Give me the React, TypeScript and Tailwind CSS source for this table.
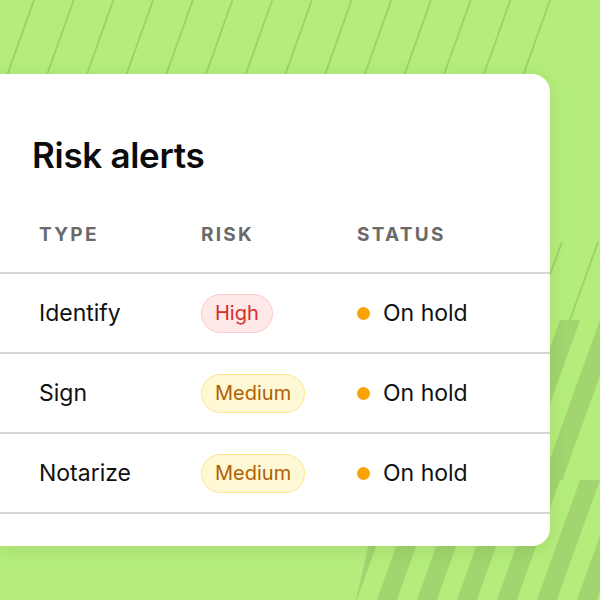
import React from 'react'

// ─── Data ─────────────────────────────────────────────────────────────────────

type Risk = 'High' | 'Medium'

interface Alert {
  type:   string
  risk:   Risk
  status: string
}

const ALERTS: Alert[] = [
  { type: 'Identify', risk: 'High',   status: 'On hold' },
  { type: 'Sign',     risk: 'Medium', status: 'On hold' },
  { type: 'Notarize', risk: 'Medium', status: 'On hold' },
]

const RISK_CLASS: Record<Risk, string> = {
  High:   'bg-[#ffe8e8] border-[#fcc8c8] text-[#d1302b]',
  Medium: 'bg-[#fff8d4] border-[#fde48c] text-[#b05f07]',
}

// ─── Background drawing ───────────────────────────────────────────────────────

const SLOPE = 0.36

function bands(ya: number, yb: number, start: number, count: number) {
  const d = (yb - ya) * SLOPE
  return Array.from({ length: count }, (_, i) => {
    const x = start + i * 40
    return `${x},${ya} ${x + 20},${ya} ${x + 20 - d},${yb} ${x - d},${yb}`
  })
}

function Backdrop() {
  const thin = Array.from({ length: 14 }, (_, i) => 34 + i * 39.7)
  return (
    <svg className="absolute inset-0" width="600" height="600" viewBox="0 0 600 600" aria-hidden>
      <defs>
        <clipPath id="band-area">
          <polygon points="420,320 600,320 600,600 356,600" />
        </clipPath>
      </defs>
      {thin.map(x => (
        <line key={x} x1={x} y1={0} x2={x - 30} y2={84} stroke="#9cd169" strokeWidth="1.8" />
      ))}
      <line x1={562} y1={242} x2={548} y2={280} stroke="#9cd169" strokeWidth="1.8" />
      <line x1={598} y1={242} x2={570} y2={320} stroke="#9cd169" strokeWidth="1.8" />
      <g clipPath="url(#band-area)" fill="#a2d46f">
        {bands(320, 480, 400, 6).map(p => <polygon key={'a' + p} points={p} />)}
        {bands(480, 600, 380, 8).map(p => <polygon key={'b' + p} points={p} />)}
      </g>
    </svg>
  )
}

// ─── Component ────────────────────────────────────────────────────────────────

export default function App() {
  return (
    <div
      className="relative w-[600px] h-[600px] overflow-hidden bg-[#b4ed7c] pt-[74px]"
      style={{ fontFamily: 'Inter, "Noto Sans", sans-serif' }}
    >
      <Backdrop />

      <div className="relative w-[550px] h-[472px] bg-white rounded-r-[18px] shadow-[0_4px_18px_rgba(60,110,20,0.12)]">
        <h1 className="pl-[32px] pt-[60px] text-[35px] leading-[42px] font-semibold tracking-[-0.3px] text-[#0b0b0b]">
          Risk alerts
        </h1>

        {/* Header */}
        <div className="mt-[22px] h-[74px] flex items-center pl-[39px] text-[19px] font-bold tracking-[0.12em] text-[#6a6a6a]">
          <span className="w-[162px]">TYPE</span>
          <span className="w-[156px]">RISK</span>
          <span>STATUS</span>
        </div>

        {/* Rows */}
        {ALERTS.map(a => (
          <div key={a.type} className="h-[80px] flex items-center pl-[39px] border-t-2 border-[#d6d6d6]">
            <span className="w-[162px] text-[23px] text-[#111111]">{a.type}</span>
            <span className="w-[156px]">
              <span className={`inline-flex items-center h-[39px] px-[13px] rounded-full border-[1.5px] text-[20px] ${RISK_CLASS[a.risk]}`}>
                {a.risk}
              </span>
            </span>
            <span className="flex items-center gap-[13px] text-[23px] text-[#111111]">
              <span className="w-[13px] h-[13px] rounded-full bg-[#fba304]" />
              {a.status}
            </span>
          </div>
        ))}
        <div className="border-t-2 border-[#d6d6d6]" />
      </div>
    </div>
  )
}
